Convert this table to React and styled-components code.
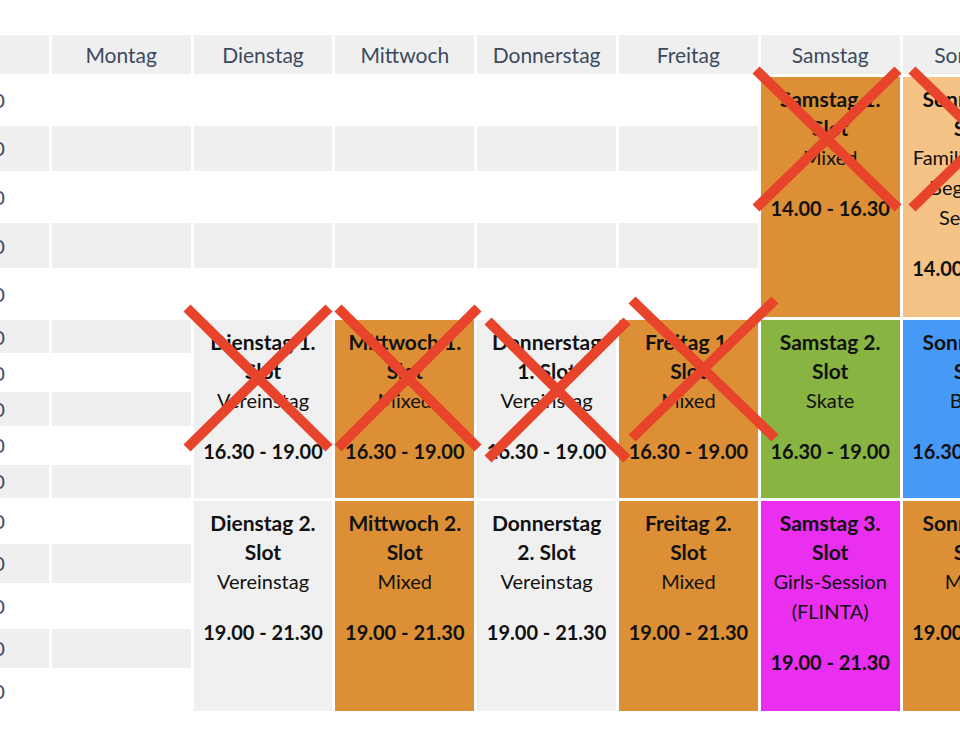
import React from "react";
import styled, { createGlobalStyle } from "styled-components";

const GlobalStyle = createGlobalStyle`
  html, body {
    margin: 0;
    padding: 0;
    background: #ffffff;
  }
  body {
    font-family: Lato, "Open Sans", "Liberation Sans", sans-serif;
    overflow: hidden;
  }
`;

const days = ["Montag", "Dienstag", "Mittwoch", "Donnerstag", "Freitag", "Samstag", "Sonntag"];

const times = [
  "14.00", "14.30", "15.00", "15.30", "16.00",
  "16.30", "17.00", "17.30", "18.00", "18.30",
  "19.00", "19.30", "20.00", "20.30", "21.00",
];

const colors = {
  verein: "#f0f0f0",
  mixed: "#dc8f35",
  family: "#f6c386",
  skate: "#88b441",
  bmx: "#4799f7",
  girls: "#ea2ff0",
};

// day index is 0 = Montag, row index 0 = 14.00
const slots = [
  { day: 5, row: 0, title: "Samstag 1. Slot", sub: ["Mixed"], time: "14.00 - 16.30", kind: "mixed" },
  { day: 6, row: 0, title: "Sonntag 1. Slot", sub: ["Familien- und Beginner-Session"], time: "14.00 - 16.30", kind: "family" },
  { day: 1, row: 5, title: "Dienstag 1. Slot", sub: ["Vereinstag"], time: "16.30 - 19.00", kind: "verein" },
  { day: 2, row: 5, title: "Mittwoch 1. Slot", sub: ["Mixed"], time: "16.30 - 19.00", kind: "mixed" },
  { day: 3, row: 5, title: "Donnerstag 1. Slot", sub: ["Vereinstag"], time: "16.30 - 19.00", kind: "verein" },
  { day: 4, row: 5, title: "Freitag 1. Slot", sub: ["Mixed"], time: "16.30 - 19.00", kind: "mixed" },
  { day: 5, row: 5, title: "Samstag 2. Slot", sub: ["Skate"], time: "16.30 - 19.00", kind: "skate" },
  { day: 6, row: 5, title: "Sonntag 2. Slot", sub: ["BMX"], time: "16.30 - 19.00", kind: "bmx" },
  { day: 1, row: 10, title: "Dienstag 2. Slot", sub: ["Vereinstag"], time: "19.00 - 21.30", kind: "verein" },
  { day: 2, row: 10, title: "Mittwoch 2. Slot", sub: ["Mixed"], time: "19.00 - 21.30", kind: "mixed" },
  { day: 3, row: 10, title: "Donnerstag 2. Slot", sub: ["Vereinstag"], time: "19.00 - 21.30", kind: "verein" },
  { day: 4, row: 10, title: "Freitag 2. Slot", sub: ["Mixed"], time: "19.00 - 21.30", kind: "mixed" },
  { day: 5, row: 10, title: "Samstag 3. Slot", sub: ["Girls-Session", "(FLINTA)"], time: "19.00 - 21.30", kind: "girls" },
  { day: 6, row: 10, title: "Sonntag 3. Slot", sub: ["Mixed"], time: "19.00 - 21.30", kind: "mixed" },
];

// cancelled slots, crossed out by hand on the page
const crosses = [
  { x: 751, y: 65, w: 152, h: 148 },
  { x: 907, y: 65, w: 152, h: 148 },
  { x: 182, y: 303, w: 152, h: 150 },
  { x: 333, y: 303, w: 150, h: 150 },
  { x: 483, y: 316, w: 149, h: 148 },
  { x: 627, y: 295, w: 153, h: 148 },
];

const SPAN = 5;

export default function App() {
  const cells = [];

  times.forEach((time, r) => {
    cells.push(
      <TimeCell key={`t${r}`} $row={r + 2} $striped={r % 2 === 1}>
        {time}
      </TimeCell>
    );
    days.forEach((day, d) => {
      const start = slots.find((s) => s.day === d && s.row === r);
      if (start) {
        cells.push(
          <SlotCell key={`s${d}-${r}`} $col={d + 2} $row={r + 2} $bg={colors[start.kind]}>
            <SlotTitle>{start.title}</SlotTitle>
            {start.sub.map((line) => (
              <SlotSub key={line}>{line}</SlotSub>
            ))}
            <SlotTime>{start.time}</SlotTime>
          </SlotCell>
        );
        return;
      }
      const covered = slots.some((s) => s.day === d && r > s.row && r < s.row + SPAN);
      if (covered) return;
      cells.push(<EmptyCell key={`e${d}-${r}`} $col={d + 2} $row={r + 2} $striped={r % 2 === 1} />);
    });
  });

  return (
    <Page>
      <GlobalStyle />
      <Timetable>
        <HeadCell $col={1} />
        {days.map((day, d) => (
          <HeadCell key={day} $col={d + 2}>
            {day}
          </HeadCell>
        ))}
        {cells}
      </Timetable>
      {crosses.map((c, i) => (
        <Cross key={i} $x={c.x} $y={c.y} width={c.w} height={c.h} viewBox={`0 0 ${c.w} ${c.h}`}>
          <line x1="5" y1="5" x2={c.w - 5} y2={c.h - 5} />
          <line x1={c.w - 5} y1="5" x2="5" y2={c.h - 5} />
        </Cross>
      ))}
    </Page>
  );
}

const Page = styled.div`
  position: relative;
  width: 960px;
  height: 750px;
  overflow: hidden;
  padding-top: 35px;
  box-sizing: border-box;
`;

const Timetable = styled.div`
  display: grid;
  margin-left: -90px;
  grid-template-columns: repeat(8, 138.8px);
  grid-template-rows: 39px repeat(5, 45.6px) repeat(5, 33.2px) repeat(5, 39.6px);
  gap: 3px;
  width: max-content;
`;

const BaseCell = styled.div`
  grid-column: ${(p) => p.$col};
  grid-row: ${(p) => p.$row};
  box-sizing: border-box;
  text-align: center;
`;

const HeadCell = styled(BaseCell)`
  grid-row: 1;
  display: flex;
  align-items: center;
  justify-content: center;
  background: #efefef;
  color: #3b4a5e;
  font-size: 21px;
`;

const TimeCell = styled(BaseCell)`
  grid-column: 1;
  display: flex;
  align-items: center;
  justify-content: center;
  background: ${(p) => (p.$striped ? "#efefef" : "#ffffff")};
  color: #3b4a5e;
  font-size: 20px;
`;

const EmptyCell = styled(BaseCell)`
  background: ${(p) => (p.$striped ? "#efefef" : "#ffffff")};
`;

const SlotCell = styled(BaseCell)`
  grid-row: ${(p) => p.$row} / span ${SPAN};
  background: ${(p) => p.$bg};
  padding: 7px 8px;
  color: #111111;
`;

const SlotTitle = styled.div`
  font-weight: 700;
  font-size: 21px;
  line-height: 29px;
`;

const SlotSub = styled.div`
  font-size: 20px;
  line-height: 30px;
  &:first-of-type {
    margin-top: 3px;
  }
`;

const SlotTime = styled.div`
  font-weight: 700;
  font-size: 20px;
  line-height: 29px;
  margin-top: 22px;
  white-space: nowrap;
`;

const Cross = styled.svg`
  position: absolute;
  left: ${(p) => p.$x}px;
  top: ${(p) => p.$y}px;
  overflow: visible;
  pointer-events: none;
  line {
    stroke: #e8442b;
    stroke-width: 10;
  }
`;
